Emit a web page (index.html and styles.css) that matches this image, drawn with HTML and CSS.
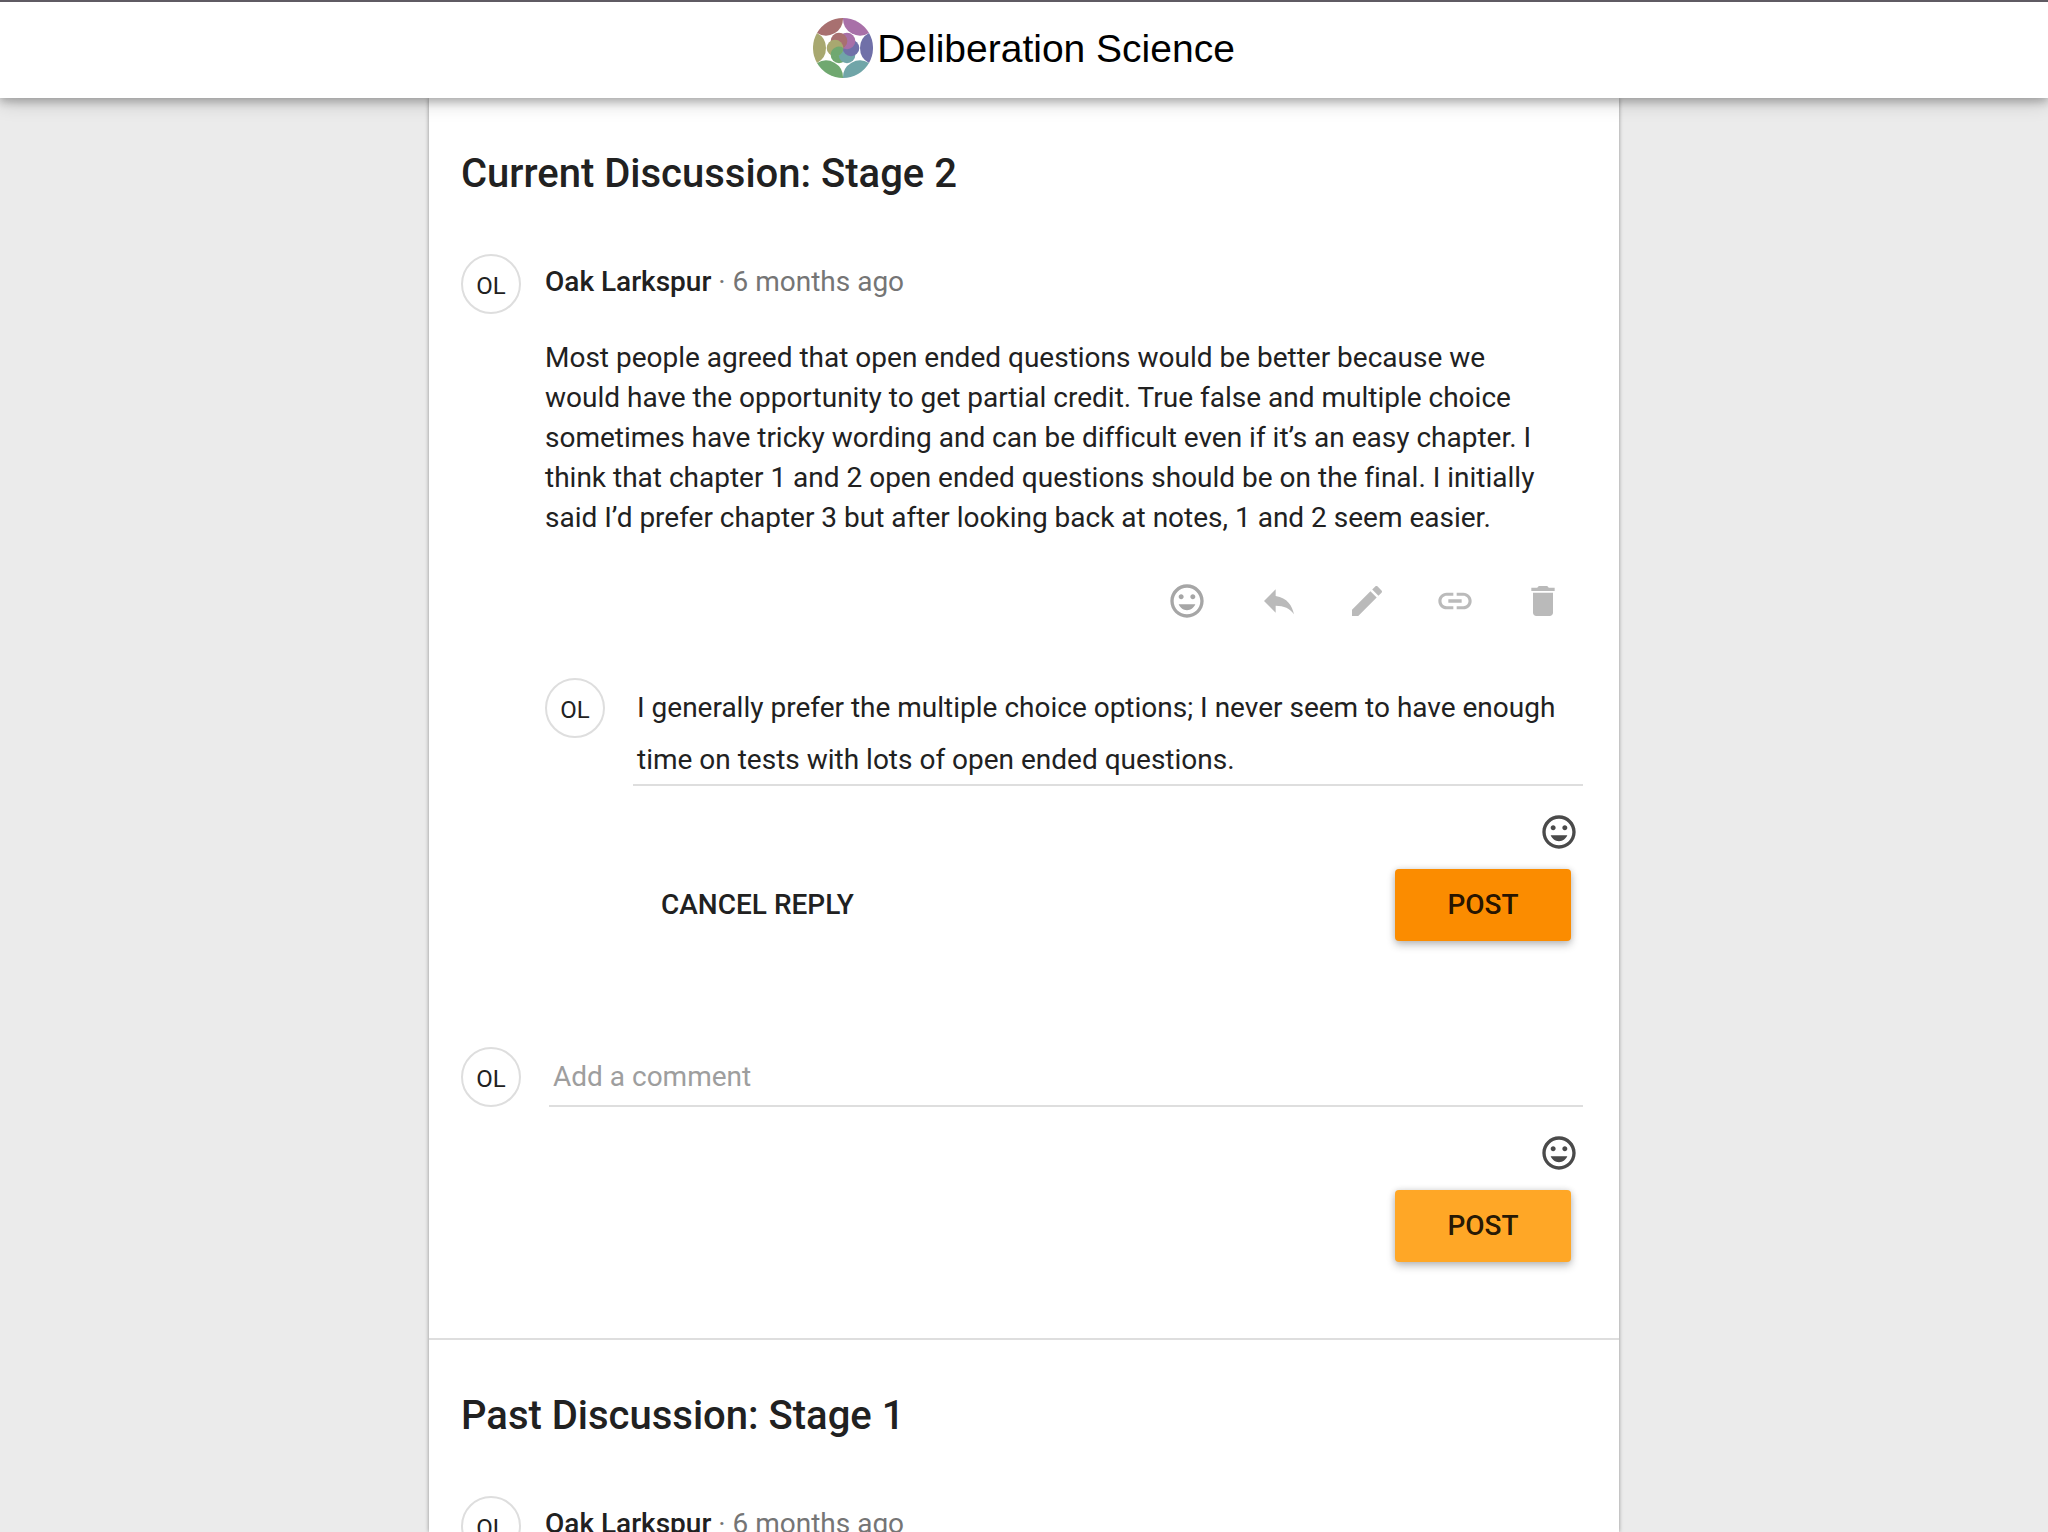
FILE: index.html
```html
<!DOCTYPE html>
<html lang="en">
<head>
<meta charset="utf-8">
<title>Deliberation Science</title>
<meta name="viewport" content="width=device-width, initial-scale=1">
<link rel="stylesheet" href="styles.css">
</head>
<body>
<svg class="sprite" aria-hidden="true">
  <symbol id="icon-mood" viewBox="0 0 24 24"><path d="M11.99 2C6.47 2 2 6.48 2 12s4.47 10 9.99 10C17.52 22 22 17.52 22 12S17.52 2 11.99 2zM12 20c-4.42 0-8-3.58-8-8s3.58-8 8-8 8 3.58 8 8-3.58 8-8 8zm3.5-9c.83 0 1.5-.67 1.5-1.5S16.33 8 15.500 8 14 8.670 14 9.500s.67 1.500 1.500 1.500zm-7 0c.83 0 1.500-.67 1.500-1.500S9.330 8 8.500 8 7 8.670 7 9.500 7.670 11 8.500 11zM7 14c.8 2.050 2.700 3.500 5 3.500s4.200-1.450 5-3.500z"/></symbol>
  <symbol id="icon-reply" viewBox="0 0 24 24"><path d="M10 9V5l-7 7 7 7v-4.100c5 0 8.500 1.600 11 5.100-1-5-4-10-11-11z"/></symbol>
  <symbol id="icon-edit" viewBox="0 0 24 24"><path d="M3 17.250V21h3.750L17.810 9.940l-3.750-3.750L3 17.250zM20.710 7.040c.39-.39.39-1.020 0-1.410l-2.340-2.340c-.39-.39-1.020-.39-1.410 0l-1.830 1.830 3.750 3.750 1.830-1.830z"/></symbol>
  <symbol id="icon-link" viewBox="0 0 24 24"><path d="M3.900 12c0-1.710 1.390-3.100 3.100-3.100h4V7H7c-2.760 0-5 2.240-5 5s2.240 5 5 5h4v-1.900H7c-1.710 0-3.100-1.390-3.100-3.100zM8 13h8v-2H8v2zm9-6h-4v1.900h4c1.710 0 3.100 1.390 3.100 3.100s-1.390 3.100-3.100 3.100h-4V17h4c2.760 0 5-2.240 5-5s-2.240-5-5-5z"/></symbol>
  <symbol id="icon-delete" viewBox="0 0 24 24"><path d="M6 19c0 1.100.9 2 2 2h8c1.100 0 2-.9 2-2V7H6v12zM19 4h-3.500l-1-1h-5l-1 1H5v2h14V4z"/></symbol>
</svg>

<header class="topbar">
  <svg class="logo" viewBox="0 0 60 60" aria-hidden="true">
    <path fill="#a87070" d="M4 15A30 30 0 0 1 30 0A17 17 0 0 1 4 15z"/>
    <path fill="#a870a8" d="M30 0A30 30 0 0 1 56 15A17 17 0 0 1 30 0z"/>
    <path fill="#7070a8" d="M56 15A30 30 0 0 1 56 45A17 17 0 0 1 56 15z"/>
    <path fill="#70a5a8" d="M56 45A30 30 0 0 1 30 60A17 17 0 0 1 56 45z"/>
    <path fill="#70a870" d="M30 60A30 30 0 0 1 4 45A17 17 0 0 1 30 60z"/>
    <path fill="#a8a870" d="M4 45A30 30 0 0 1 4 15A17 17 0 0 1 4 45z"/>
    <circle cx="26" cy="37" r="8.300" fill="#70a870"/>
    <circle cx="34" cy="37" r="8.300" fill="#70a5a8"/>
    <circle cx="38" cy="30" r="8.300" fill="#7070a8"/>
    <circle cx="34" cy="23" r="8.300" fill="#a870a8"/>
    <circle cx="26" cy="23" r="8.300" fill="#a87070"/>
    <circle cx="22" cy="30" r="8.300" fill="#a8a870"/>
    <path fill="#70a870" d="M17.700 37.100A8.300 8.300 0 0 1 30.300 29.900A8.300 8.300 0 0 1 17.700 37.100z"/>
  </svg>
  <span class="brand">Deliberation Science</span>
</header>

<main class="sheet">
  <section class="stage">
    <h2 class="stage-title">Current Discussion: Stage 2</h2>

    <article class="entry">
      <span class="avatar">OL</span>
      <div class="entry-main">
        <p class="byline"><strong class="author">Oak Larkspur</strong> · <time>6 months ago</time></p>
        <p class="message">Most people agreed that open ended questions would be better because we would have the opportunity to get partial credit. True false and multiple choice sometimes have tricky wording and can be difficult even if it’s an easy chapter. I think that chapter 1 and 2 open ended questions should be on the final. I initially said I’d prefer chapter 3 but after looking back at notes, 1 and 2 seem easier.</p>
        <div class="actions">
          <button class="icon-button react" type="button" aria-label="React"><svg class="icon"><use href="#icon-mood"/></svg></button>
          <button class="icon-button" type="button" aria-label="Reply"><svg class="icon"><use href="#icon-reply"/></svg></button>
          <button class="icon-button" type="button" aria-label="Edit"><svg class="icon"><use href="#icon-edit"/></svg></button>
          <button class="icon-button" type="button" aria-label="Copy link"><svg class="icon"><use href="#icon-link"/></svg></button>
          <button class="icon-button" type="button" aria-label="Delete"><svg class="icon"><use href="#icon-delete"/></svg></button>
        </div>

        <form class="entry reply">
          <span class="avatar">OL</span>
          <div class="composer">
            <textarea class="field" rows="2" aria-label="Reply">I generally prefer the multiple choice options; I never seem to have enough time on tests with lots of open ended questions.</textarea>
            <button class="icon-button emoji" type="button" aria-label="Insert emoji"><svg class="icon"><use href="#icon-mood"/></svg></button>
            <div class="buttons">
              <button class="button" type="button">CANCEL REPLY</button>
              <button class="button post active" type="submit">POST</button>
            </div>
          </div>
        </form>
      </div>
    </article>

    <form class="entry comment">
      <span class="avatar">OL</span>
      <div class="composer">
        <input class="field" type="text" placeholder="Add a comment" aria-label="Add a comment">
        <button class="icon-button emoji" type="button" aria-label="Insert emoji"><svg class="icon"><use href="#icon-mood"/></svg></button>
        <div class="buttons">
          <button class="button post" type="submit">POST</button>
        </div>
      </div>
    </form>
  </section>

  <section class="stage">
    <h2 class="stage-title">Past Discussion: Stage 1</h2>
    <article class="entry">
      <span class="avatar">OL</span>
      <div class="entry-main">
        <p class="byline"><strong class="author">Oak Larkspur</strong> · <time>6 months ago</time></p>
      </div>
    </article>
  </section>
</main>
</body>
</html>
```

FILE: styles.css
```css
*, *::before, *::after { box-sizing: border-box; }

body {
  margin: 0;
  height: 100vh;
  display: flex;
  flex-direction: column;
  align-items: center;
  overflow: hidden;
  background: #ebebeb;
  color: #212121;
  font: 400 28px/40px Roboto, sans-serif;
  font-variant-ligatures: none;
}

h2, p { margin: 0; }
button, input, textarea { font: inherit; color: inherit; }
button { padding: 0; border: 0; background: none; cursor: pointer; }

.sprite { display: none; }

/* Top bar */
.topbar {
  position: relative;
  flex: none;
  align-self: stretch;
  display: flex;
  justify-content: center;
  align-items: center;
  gap: 4px;
  height: 98px;
  padding-bottom: 4px;
  border-top: 2px solid #5f5b63;
  background: #fff;
  box-shadow: 0 4px 8px rgba(0, 0, 0, .2), 0 2px 20px rgba(0, 0, 0, .24);
}
.logo { width: 60px; height: 60px; }
.brand { font: 400 39px/48px "Liberation Sans", Arial, sans-serif; padding-top: 2px; color: #000; }

/* Discussion column */
.sheet {
  flex: 1;
  min-height: 0;
  width: 100%;
  max-width: 1190px;
  overflow: hidden;
  z-index: -1;
  background: #fff;
  box-shadow: 0 0 4px rgba(0, 0, 0, .4);
}
.stage { padding: 48px 36px 76px 32px; }
.stage + .stage { border-top: 2px solid #dedede; }
.stage-title { font-size: 40px; line-height: 56px; font-weight: 500; margin-bottom: 52px; }

.entry { display: flex; gap: 24px; }
.entry-main { flex: 1; min-width: 0; }
.avatar {
  flex: none;
  width: 60px;
  height: 60px;
  border: 2px solid #dedede;
  border-radius: 50%;
  font-size: 24px;
  line-height: 60px;
  text-align: center;
}

.byline { padding: 8px 0 36px; color: #757575; }
.author { font-weight: 500; color: #212121; }
.message { padding-right: 20px; }

.actions {
  display: flex;
  justify-content: flex-end;
  margin: 43px 20px 57px 0;
  gap: 48px;
  color: #bababa;
}
.icon-button { display: block; width: 40px; height: 40px; }
.icon { display: block; width: 40px; height: 40px; fill: currentColor; }
.react { color: #a6a6a6; margin-right: 4px; }

/* Reply and comment forms */
.composer {
  flex: 1;
  min-width: 0;
  display: flex;
  flex-direction: column;
  margin-left: 4px;
}
.field {
  width: 100%;
  border: 0;
  border-bottom: 2px solid #dedede;
  outline: 0;
  resize: none;
  background: none;
  line-height: 52px;
  overflow: hidden;
}
textarea.field { height: 108px; padding: 4px 12px 0 4px; }
input.field { height: 60px; padding: 0 4px; }
.field::placeholder { color: #9e9e9e; opacity: 1; }

.emoji { align-self: flex-end; margin: 26px 4px 17px 0; color: #4a4a4a; }
.buttons { display: flex; justify-content: flex-end; padding-right: 12px; }
.button { height: 72px; padding: 0 28px; border-radius: 4px; font-weight: 500; }
.reply .buttons { justify-content: space-between; }
.post {
  width: 176px;
  background: #ffa726;
  color: rgba(0, 0, 0, .87);
  box-shadow: 0 4px 8px rgba(0, 0, 0, .24), 0 0 6px rgba(0, 0, 0, .12);
}
.post.active { background: #fb8c00; }
.comment { margin-top: 106px; }
```
